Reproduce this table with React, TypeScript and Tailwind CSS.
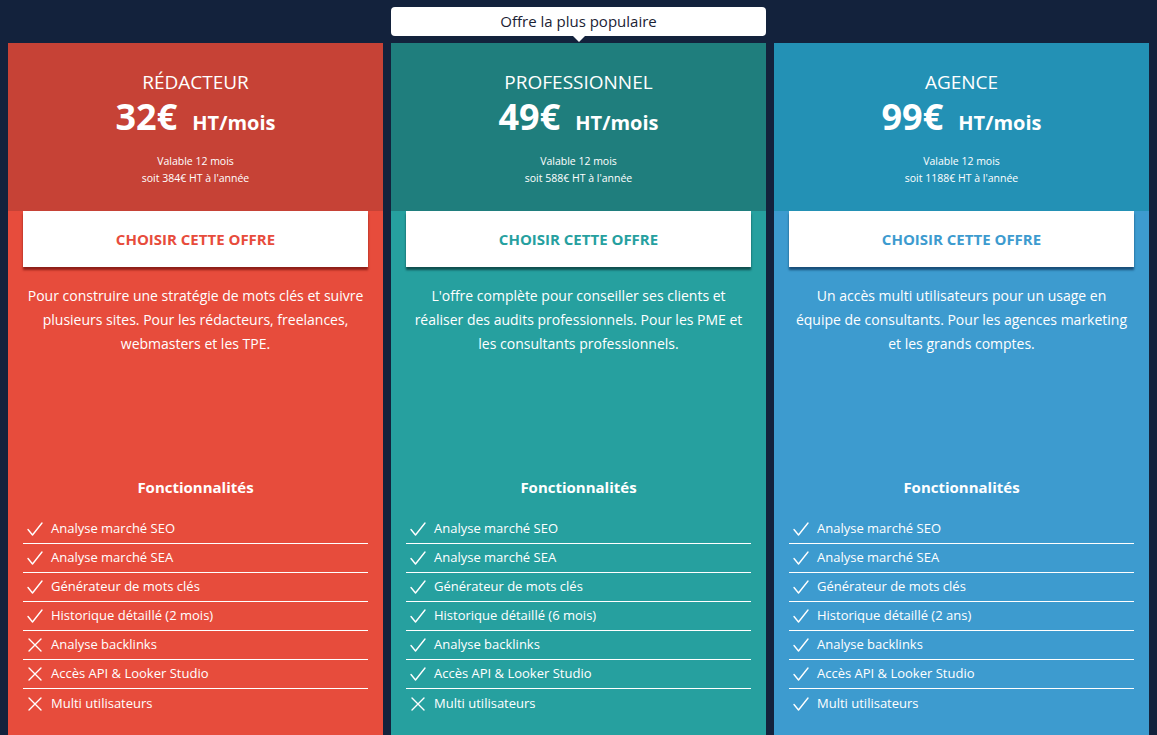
import React from "react";

type Plan = {
  name: string;
  price: string;
  year: string;
  head: string;
  body: string;
  text: string;
  shadow: string;
  desc: string[];
  features: [string, boolean][];
  popular?: boolean;
};

const plans: Plan[] = [
  {
    name: "RÉDACTEUR",
    price: "32€",
    year: "soit 384€ HT à l'année",
    head: "bg-[#c64236]",
    body: "bg-[#e74c3c]",
    text: "text-[#e74c3c]",
    shadow: "shadow-[0_3px_2px_rgba(120,20,15,0.8)]",
    desc: [
      "Pour construire une stratégie de mots clés et suivre",
      "plusieurs sites. Pour les rédacteurs, freelances,",
      "webmasters et les TPE.",
    ],
    features: [
      ["Analyse marché SEO", true],
      ["Analyse marché SEA", true],
      ["Générateur de mots clés", true],
      ["Historique détaillé (2 mois)", true],
      ["Analyse backlinks", false],
      ["Accès API & Looker Studio", false],
      ["Multi utilisateurs", false],
    ],
  },
  {
    name: "PROFESSIONNEL",
    price: "49€",
    year: "soit 588€ HT à l'année",
    head: "bg-[#1f7e7d]",
    body: "bg-[#26a09f]",
    text: "text-[#26a09f]",
    shadow: "shadow-[0_3px_2px_rgba(10,60,60,0.8)]",
    desc: [
      "L'offre complète pour conseiller ses clients et",
      "réaliser des audits professionnels. Pour les PME et",
      "les consultants professionnels.",
    ],
    features: [
      ["Analyse marché SEO", true],
      ["Analyse marché SEA", true],
      ["Générateur de mots clés", true],
      ["Historique détaillé (6 mois)", true],
      ["Analyse backlinks", true],
      ["Accès API & Looker Studio", true],
      ["Multi utilisateurs", false],
    ],
    popular: true,
  },
  {
    name: "AGENCE",
    price: "99€",
    year: "soit 1188€ HT à l'année",
    head: "bg-[#2391b5]",
    body: "bg-[#3d9bcf]",
    text: "text-[#3d9bcf]",
    shadow: "shadow-[0_3px_2px_rgba(15,60,100,0.8)]",
    desc: [
      "Un accès multi utilisateurs pour un usage en",
      "équipe de consultants. Pour les agences marketing",
      "et les grands comptes.",
    ],
    features: [
      ["Analyse marché SEO", true],
      ["Analyse marché SEA", true],
      ["Générateur de mots clés", true],
      ["Historique détaillé (2 ans)", true],
      ["Analyse backlinks", true],
      ["Accès API & Looker Studio", true],
      ["Multi utilisateurs", true],
    ],
  },
];

function Check() {
  return (
    <svg width="18" height="16" viewBox="0 0 18 16" fill="none" className="shrink-0">
      <path d="M2 8.5 L6.5 14 L16 2" stroke="white" strokeWidth="1.4" strokeLinecap="round" strokeLinejoin="round" />
    </svg>
  );
}

function Cross() {
  return (
    <svg width="18" height="16" viewBox="0 0 18 16" fill="none" className="shrink-0">
      <path d="M3 2 L15 14 M15 2 L3 14" stroke="white" strokeWidth="1.4" strokeLinecap="round" />
    </svg>
  );
}

function Card({ p }: { p: Plan }) {
  return (
    <div className="relative flex flex-col">
      {p.popular && (
        <div className="absolute left-0 right-0 top-[-36px] h-[29px] rounded-[4px] bg-white flex items-center justify-center text-[15px] text-[#1b2234]">
          Offre la plus populaire
          <div className="absolute bottom-[-6px] left-1/2 -translate-x-1/2 w-0 h-0 border-l-[6px] border-r-[6px] border-t-[6px] border-l-transparent border-r-transparent border-t-white" />
        </div>
      )}
      <div className={`${p.head} h-[168px] flex flex-col items-center pt-[25px] text-white`}>
        <div className="text-[19px] leading-[28px]">{p.name}</div>
        <div className="flex items-baseline gap-[15px] mt-[1px] leading-[40px]">
          <span className="text-[36px] font-bold">{p.price}</span>
          <span className="text-[20px] font-bold">HT/mois</span>
        </div>
        <div className="mt-[10px] text-[10.5px] leading-[17px] text-center">
          <div>Valable 12 mois</div>
          <div>{p.year}</div>
        </div>
      </div>
      <div className={`${p.body} flex-1 flex flex-col px-[15px] pb-[40px] text-white`}>
        <div className={`bg-white h-[56px] flex items-center justify-center ${p.shadow}`}>
          <span className={`${p.text} font-bold text-[15px]`}>CHOISIR CETTE OFFRE</span>
        </div>
        <div className="mt-[17px] h-[193px] text-center text-[14px] leading-[24px] whitespace-nowrap">
          {p.desc.map((l) => (
            <div key={l}>{l}</div>
          ))}
        </div>
        <div className="text-center font-bold text-[15px] leading-[20px]">Fonctionnalités</div>
        <div className="mt-[18px]">
          {p.features.map(([f, ok], i) => (
            <div
              key={f}
              className={`h-[29px] flex items-center gap-[7px] pl-[3px] text-[13px] ${i < p.features.length - 1 ? "border-b border-white" : ""}`}
            >
              {ok ? <Check /> : <Cross />}
              <span>{f}</span>
            </div>
          ))}
        </div>
      </div>
    </div>
  );
}

export default function App() {
  return (
    <div
      className="min-h-screen bg-[#13223c] px-[8px] pt-[43px]"
      style={{ fontFamily: '"Open Sans", "Noto Sans", sans-serif' }}
    >
      <div className="grid grid-cols-3 gap-[8px]">
        {plans.map((p) => (
          <Card key={p.name} p={p} />
        ))}
      </div>
    </div>
  );
}
